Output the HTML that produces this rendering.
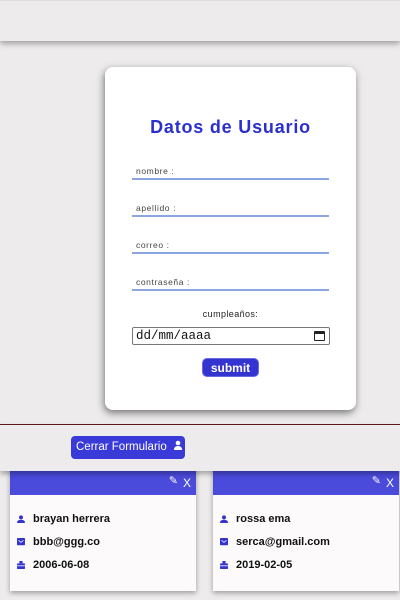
<!DOCTYPE html>
<html><head><meta charset="utf-8"><style>
*{margin:0;padding:0;box-sizing:border-box}
html,body{width:400px;height:600px;overflow:hidden}
body{background:#edebeb;font-family:"Liberation Sans",sans-serif;position:relative}
.hdr{position:absolute;left:0;top:0;width:400px;height:41px;background:#edebeb;border-top:1px solid #ddd;box-shadow:0 3px 5px rgba(0,0,0,.3)}
.card{position:absolute;left:105px;top:67px;width:251px;height:343px;background:#fff;border-radius:8px;box-shadow:-1px 3px 8px rgba(0,0,0,.5)}
h1{position:absolute;left:0;width:100%;top:50px;text-align:center;color:#2a2fcf;font-size:18px;font-weight:bold;letter-spacing:.8px}
.f{position:absolute;left:27px;width:197px;height:14px;border-bottom:2px solid #8ba6e0;font-size:8.5px;color:#444;padding-left:4px;letter-spacing:.6px}
.lbl{position:absolute;left:0;width:100%;top:242px;text-align:center;font-size:9px;color:#222;letter-spacing:.4px}
.date{position:absolute;left:27px;top:260px;width:198px;height:18px;border:1px solid #777;border-radius:2px;font-family:"Liberation Mono",monospace;font-size:12.5px;padding:1px 0 0 3px;color:#111}
.cal{position:absolute;right:4px;top:3px;width:11px;height:10px;border:1.5px solid #222;border-top-width:3px;border-radius:1px}
.sub{position:absolute;left:97px;top:291px;width:57px;height:19px;background:#3434d0;border-radius:5px;color:#fff;font-weight:bold;font-size:12px;text-align:center;line-height:18px;border:1px solid #6a6ae0}
.rule{position:absolute;left:0;top:424px;width:400px;height:1px;background:#5a1a1a}
.low{position:absolute;left:0;top:425px;width:400px;height:46px;background:#edebeb;box-shadow:0 3px 5px rgba(0,0,0,.3);z-index:2}
.cf{position:absolute;left:71px;top:11px;width:114px;height:23px;background:#3a3ad8;border-radius:4px;color:#fff;font-size:11.5px;line-height:23px;padding-left:5px;white-space:nowrap}
.uc{position:absolute;top:466px;width:186px;height:125px;background:#fcfafa;box-shadow:0 2px 5px rgba(0,0,0,.35)}
.uc .bar{height:29px;background:#4a4adb;position:relative}
.uc .x{position:absolute;right:5px;top:10px;color:#fff;font-size:12px}
.uc .p{position:absolute;right:18px;top:8px;color:#fff;font-size:11px}
.row{position:absolute;left:7px;font-size:11px;font-weight:bold;color:#111;display:flex;align-items:center}
.ic{width:8px;height:8px;margin-right:8px;display:inline-block}
</style></head><body>
<div class="hdr"></div>
<div class="card">
<h1>Datos de Usuario</h1>
<div class="f" style="top:99px">nombre :</div>
<div class="f" style="top:136px">apellido :</div>
<div class="f" style="top:173px">correo :</div>
<div class="f" style="top:210px">contraseña :</div>
<div class="lbl">cumpleaños:</div>
<div class="date">dd/mm/aaaa<span class="cal"></span></div>
<div class="sub">submit</div>
</div>
<div class="rule"></div>
<div class="low"><div class="cf">Cerrar Formulario &nbsp;<svg width="10" height="10" viewBox="0 0 10 10"><circle cx="5" cy="3" r="2.3" fill="#fff"/><path d="M1 10 Q1 6 5 6 Q9 6 9 10Z" fill="#fff"/></svg></div></div>

<div class="uc" style="left:10px">
<div class="bar"><span class="p">✎</span><span class="x">X</span></div>
<div class="row" style="top:47px"><svg class="ic" viewBox="0 0 10 10"><circle cx="5" cy="3" r="2.5" fill="#3434d0"/><path d="M0 10 Q0 6 5 6 Q10 6 10 10Z" fill="#3434d0"/></svg>brayan herrera</div>
<div class="row" style="top:70px"><svg class="ic" viewBox="0 0 10 10"><rect width="10" height="9" rx="1" fill="#3434d0"/><path d="M2 3 L5 5.5 L8 3" stroke="#fff" fill="none"/></svg>bbb@ggg.co</div>
<div class="row" style="top:93px"><svg class="ic" viewBox="0 0 10 10"><rect y="3" width="10" height="7" rx="1" fill="#3434d0"/><rect x="3" y="0" width="4" height="3" fill="#3434d0"/><line x1="0" y1="6" x2="10" y2="6" stroke="#fff"/></svg>2006-06-08</div>
</div>
<div class="uc" style="left:213px">
<div class="bar"><span class="p">✎</span><span class="x">X</span></div>
<div class="row" style="top:47px"><svg class="ic" viewBox="0 0 10 10"><circle cx="5" cy="3" r="2.5" fill="#3434d0"/><path d="M0 10 Q0 6 5 6 Q10 6 10 10Z" fill="#3434d0"/></svg>rossa ema</div>
<div class="row" style="top:70px"><svg class="ic" viewBox="0 0 10 10"><rect width="10" height="9" rx="1" fill="#3434d0"/><path d="M2 3 L5 5.5 L8 3" stroke="#fff" fill="none"/></svg>serca@gmail.com</div>
<div class="row" style="top:93px"><svg class="ic" viewBox="0 0 10 10"><rect y="3" width="10" height="7" rx="1" fill="#3434d0"/><rect x="3" y="0" width="4" height="3" fill="#3434d0"/><line x1="0" y1="6" x2="10" y2="6" stroke="#fff"/></svg>2019-02-05</div>
</div>
</body></html>
